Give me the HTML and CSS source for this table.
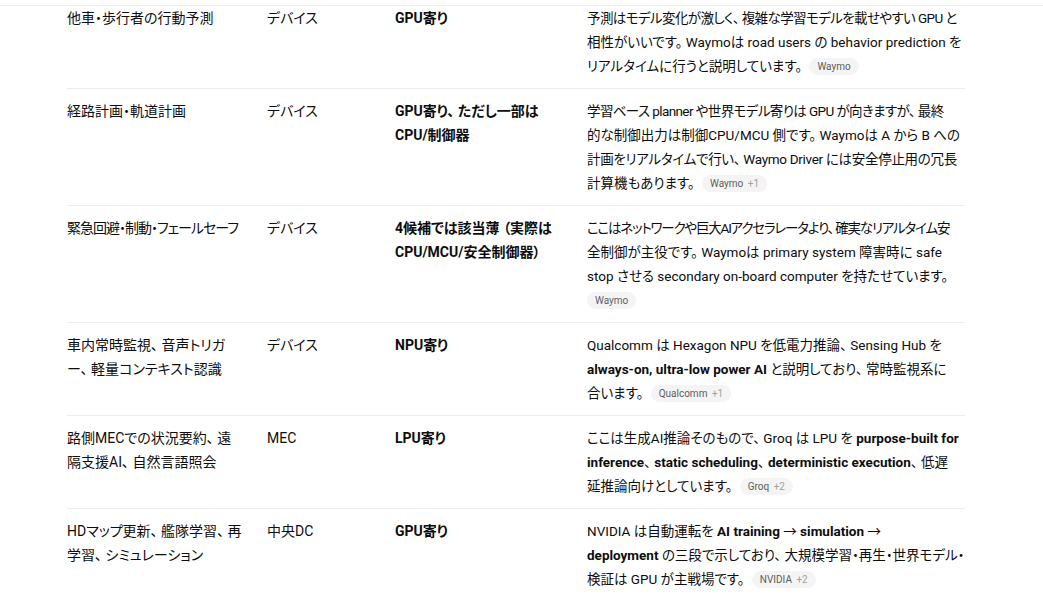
FILE: index.html
```html
<!DOCTYPE html>
<html lang="ja">
<head>
<meta charset="utf-8">
<link rel="stylesheet" href="styles.css">
</head>
<body>
<div class="topbar"></div>
<div class="wrap">
<table class="grid">
<colgroup>
<col class="c1"><col class="c2"><col class="c3"><col class="c4">
</colgroup>
<tbody>
<tr class="first">
<td>他車・歩行者の行動予測</td>
<td>デバイス</td>
<td><strong>GPU寄り</strong></td>
<td class="note"><span class="kn">予測はモデル変化が激しく、 複雑な学習モデルを載せやすい GPU と</span><br>相性がいいです。 Waymoは road users の behavior prediction を<br>リアルタイムに行うと説明しています。 <span class="chip">Waymo</span></td>
</tr>
<tr>
<td>経路計画・軌道計画</td>
<td>デバイス</td>
<td><strong>GPU寄り、 ただし一部は<br>CPU/制御器</strong></td>
<td class="note"><span class="kn">学習ベース planner や世界モデル寄りは GPU が向きますが、 最終</span><br>的な制御出力は制御CPU/MCU 側です。 Waymoは A から B への<br><span class="ks">計画をリアルタイムで行い、 Waymo Driver には安全停止用の冗長</span><br>計算機もあります。 <span class="chip">Waymo <span class="more">+1</span></span></td>
</tr>
<tr>
<td><span class="kt">緊急回避・制動・フェールセーフ</span></td>
<td>デバイス</td>
<td><strong>4候補では該当薄 （実際は<br>CPU/MCU/安全制御器）</strong></td>
<td class="note"><span class="kx">ここはネットワークや巨大AIアクセラレータより、 確実なリアルタイム安</span><br>全制御が主役です。 Waymoは primary system 障害時に safe<br>stop させる secondary on-board computer を持たせています。<br><span class="chip solo">Waymo</span></td>
</tr>
<tr>
<td>車内常時監視、 音声トリガ<br>ー、 軽量コンテキスト認識</td>
<td>デバイス</td>
<td><strong>NPU寄り</strong></td>
<td class="note">Qualcomm は Hexagon NPU を低電力推論、 Sensing Hub を<br><strong>always-on, ultra-low power AI</strong> と説明しており、 常時監視系に<br>合います。 <span class="chip">Qualcomm <span class="more">+1</span></span></td>
</tr>
<tr>
<td>路側MECでの状況要約、 遠<br>隔支援AI、 自然言語照会</td>
<td>MEC</td>
<td><strong>LPU寄り</strong></td>
<td class="note">ここは生成AI推論そのもので、 Groq は LPU を <strong>purpose-built for</strong><br><strong>inference</strong>、 <strong>static scheduling</strong>、 <strong>deterministic execution</strong>、 低遅<br>延推論向けとしています。 <span class="chip">Groq <span class="more">+2</span></span></td>
</tr>
<tr class="last">
<td>HDマップ更新、 艦隊学習、 再<br>学習、 シミュレーション</td>
<td>中央DC</td>
<td><strong>GPU寄り</strong></td>
<td class="note">NVIDIA は自動運転を <strong>AI training <span class="arrow">→</span> simulation <span class="arrow">→</span></strong><br><strong>deployment</strong> の三段で示しており、 大規模学習・再生・世界モデル・<br>検証は GPU が主戦場です。 <span class="chip">NVIDIA <span class="more">+2</span></span></td>
</tr>
</tbody>
</table>
</div>
</body>
</html>
```

FILE: styles.css
```css
html, body {
  margin: 0;
  padding: 0;
  background: #ffffff;
}

body {
  font-family: Roboto, "Noto Sans CJK JP", sans-serif;
  font-feature-settings: "palt";
  font-size: 14px;
  line-height: 24px;
  color: #0d0d0d;
  overflow: hidden;
  height: 609px;
}

.topbar {
  height: 5px;
  border-bottom: 1px solid #efefef;
}

.wrap {
  padding-left: 67px;
}

.grid {
  width: 898px;
  border-collapse: collapse;
  table-layout: fixed;
}

.c1 { width: 200px; }
.c2 { width: 128px; }
.c3 { width: 192px; }
.c4 { width: 378px; }

.grid td {
  vertical-align: top;
  padding: 10px 0 10px 0;
  border-bottom: 1px solid #ececec;
  white-space: nowrap;
}

.grid td.note {
  font-size: 13.5px;
}

.grid tr.first td {
  padding-top: 0;
}

.grid tr.last td {
  border-bottom: none;
}

.kn { letter-spacing: -0.6px; }
.ks { letter-spacing: -0.3px; }
.kx { letter-spacing: -1.2px; }
.kt { letter-spacing: -1px; }

strong {
  font-weight: 700;
}

.arrow {
  font-weight: 400;
}

.chip {
  display: inline-block;
  margin-left: 4px;
  padding: 0 8px;
  height: 17px;
  line-height: 17px;
  border-radius: 9px;
  background: #f4f4f4;
  color: #5d5d5d;
  font-size: 10px;
  font-weight: 400;
  letter-spacing: 0;
  vertical-align: 1px;
}

.chip.solo {
  margin-left: 0;
}

.chip .more {
  color: #a0a0a0;
  margin-left: 2px;
}
```
